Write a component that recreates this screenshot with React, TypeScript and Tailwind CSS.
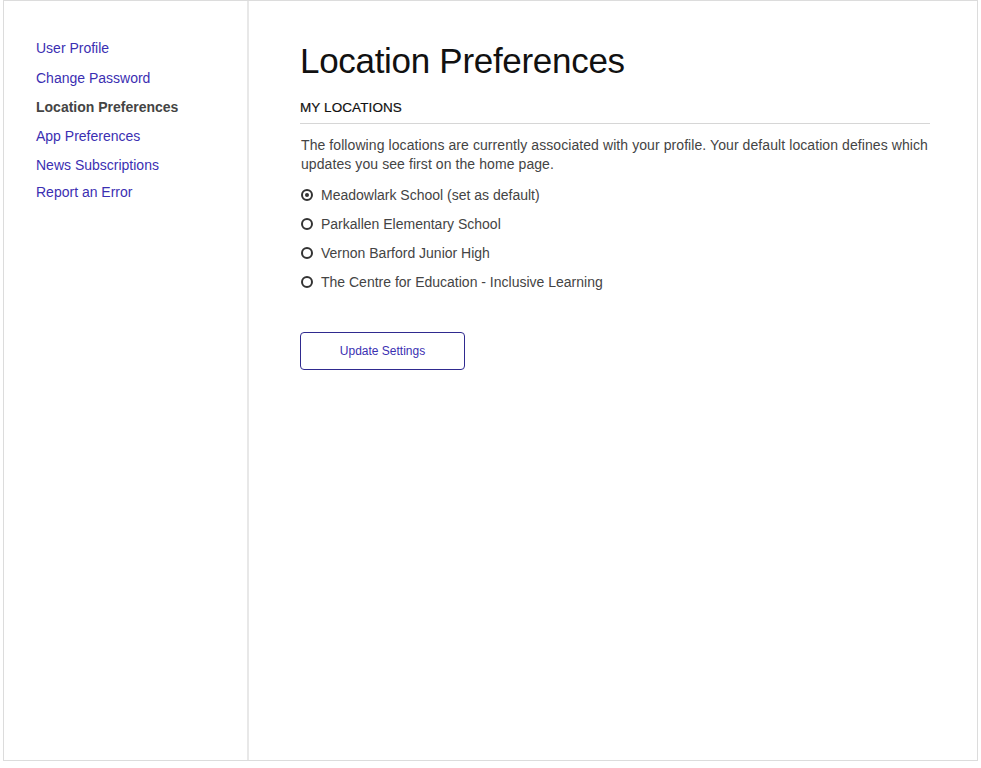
import React from 'react';

const navItems = [
  { label: 'User Profile', active: false },
  { label: 'Change Password', active: false },
  { label: 'Location Preferences', active: true },
  { label: 'App Preferences', active: false },
  { label: 'News Subscriptions', active: false },
  { label: 'Report an Error', active: false },
];

const navHeights = ['h-[30px]', 'h-[29px]', 'h-[29px]', 'h-[29px]', 'h-[27px]', 'h-[20px]'];

const locations = [
  'Meadowlark School (set as default)',
  'Parkallen Elementary School',
  'Vernon Barford Junior High',
  'The Centre for Education - Inclusive Learning',
];

const rowHeights = ['h-[29px]', 'h-[30px]', 'h-[28px]', 'h-[29px]'];

const App = () => {
  return (
    <div className="bg-white w-[981px] h-[768px] font-['Liberation_Sans',Arial,sans-serif]">
      <div className="ml-[3px] w-[975px] h-[761px] border border-[#dcdcdc] flex">
        {/* sidebar */}
        <aside className="w-[245px] shrink-0 border-r-2 border-[#e8e8e8] pl-[32px] pt-[38px]">
          <ul className="flex flex-col">
            {navItems.map((item, i) => (
              <li
                key={item.label}
                className={`text-[14px] leading-[18px] ${navHeights[i]} ${
                  item.active ? 'font-bold text-[#444444]' : 'text-[#3b2fb2]'
                }`}
              >
                {item.label}
              </li>
            ))}
          </ul>
        </aside>

        {/* main */}
        <main className="flex-1 pl-[51px] pr-[47px] pt-[38px]">
          <h1 className="text-[35px] leading-[44px] font-light text-[#111111] tracking-[-0.3px]">
            Location Preferences
          </h1>
          <h2 className="mt-[16px] text-[13.5px] leading-[18px] text-[#111111] [-webkit-text-stroke:0.2px_#111111] tracking-[0.1px] pb-[6px] border-b border-[#d6d6d6]">
            MY LOCATIONS
          </h2>
          <p className="mt-[12px] pl-px text-[14px] leading-[19px] text-[#444444] tracking-[0.08px]">
            The following locations are currently associated with your profile. Your default location defines which
            updates you see first on the home page.
          </p>
          <div className="mt-[6px] flex flex-col">
            {locations.map((loc, i) => (
              <label
                key={loc}
                className={`flex items-center gap-[8px] pl-px text-[14px] leading-[18px] text-[#444444] ${rowHeights[i]}`}
              >
                <span className="w-[12px] h-[12px] rounded-full border-2 border-[#333333] flex items-center justify-center">
                  {i === 0 && <span className="w-[4px] h-[4px] rounded-full bg-[#333333]" />}
                </span>
                {loc}
              </label>
            ))}
          </div>
          <button className="mt-[36px] w-[165px] h-[38px] rounded-[4px] border border-[#2f2a8f] text-[12px] text-[#3b2fb2] bg-white">
            Update Settings
          </button>
        </main>
      </div>
    </div>
  );
};

export default App;
